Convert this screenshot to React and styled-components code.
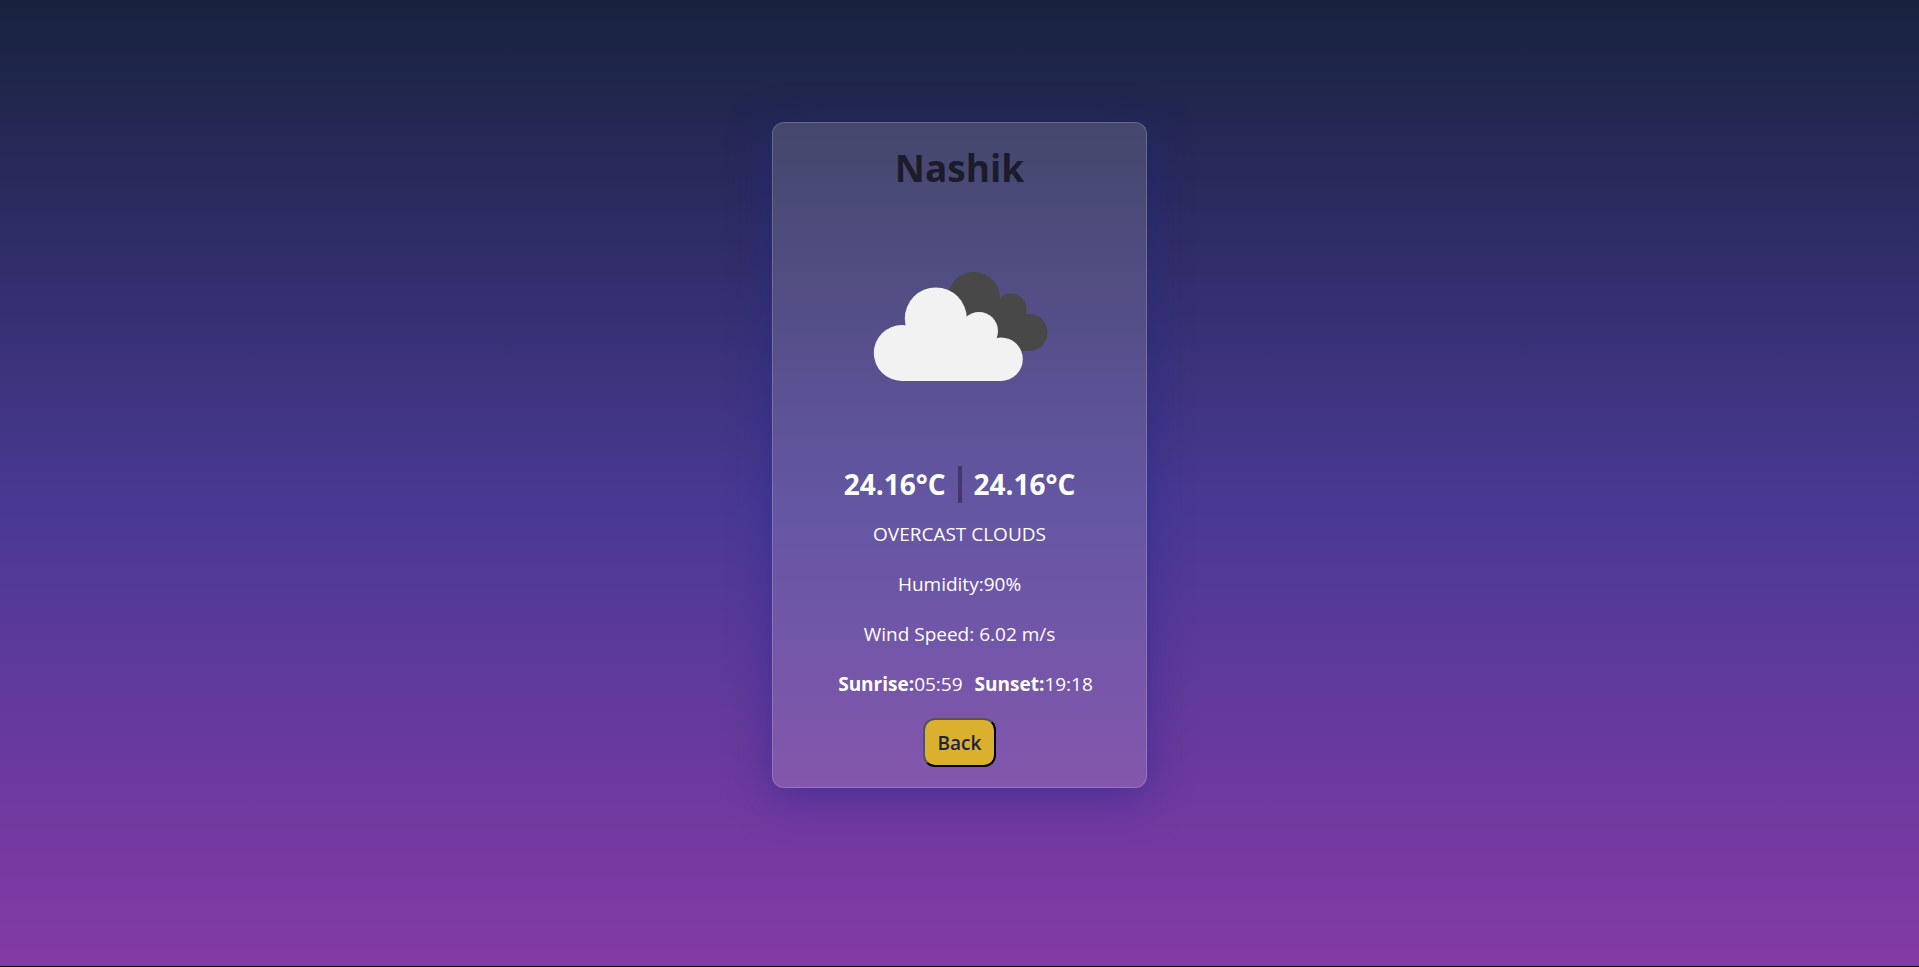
import React from "react";
import styled, { createGlobalStyle } from "styled-components";

const GlobalStyle = createGlobalStyle`
  *, *::before, *::after { box-sizing: border-box; }
  html { background: #000; }
  body {
    margin: 0;
    font-family: "Segoe UI", "Open Sans", "Noto Sans", sans-serif;
    color: #fff;
  }
  h1, p, dl, dd { margin: 0; }
`;

const Page = styled.main`
  display: flex;
  justify-content: center;
  align-items: flex-start;
  min-height: calc(100vh - 1px);
  padding: 122px 16px;
  background: linear-gradient(180deg, #17223e 0%, #4a3994 53%, #843aa5 100%);
`;

const Card = styled.article`
  display: flex;
  flex-direction: column;
  align-items: center;
  width: 100%;
  max-width: 375px;
  padding: 20px;
  border: 1px solid rgba(255, 255, 255, 0.18);
  border-radius: 12px;
  background: rgba(255, 255, 255, 0.15);
  box-shadow: 0 8px 40px rgba(31, 38, 135, 0.5);
`;

const City = styled.h1`
  margin-bottom: 9px;
  color: #1c1b2b;
  font-size: 37px;
  font-weight: 700;
  line-height: 50px;
`;

const WeatherIcon = styled.svg`
  width: 250px;
  height: 250px;
`;

const Temperatures = styled.div`
  display: flex;
  margin: 14px 0 16px;
  gap: 12px;
  font-size: 28px;
  font-weight: 700;
  line-height: 37px;
`;

const Divider = styled.span`
  width: 4px;
  background: #43376c;
`;

const Details = styled.div`
  display: flex;
  flex-direction: column;
  align-items: center;
  gap: 20px;
  font-size: 19px;
  line-height: 30px;
`;

const Condition = styled.p`
  text-transform: uppercase;
`;

const SunTimes = styled.dl`
  display: flex;
`;

const SunTime = styled.div`
  display: flex;
  margin-left: 12px;

  dt { font-weight: 700; }
`;

const BackButton = styled.button`
  margin-top: 19px;
  padding: 9px 13px 7px;
  border: 2px outset #000;
  border-radius: 12px;
  background: #dcb02f;
  color: #1b2340;
  font-family: inherit;
  font-size: 19px;
  font-weight: 600;
  line-height: 29px;
  cursor: pointer;
`;

function OvercastClouds() {
  return (
    <WeatherIcon viewBox="0 0 250 250" role="img" aria-label="Overcast clouds">
      <g fill="#484849">
        <circle cx="139" cy="96" r="26" />
        <circle cx="176" cy="107" r="15.5" />
        <circle cx="194" cy="130.5" r="18.6" />
        <path d="M139 90L176 100L194 130V149H139Z" />
      </g>
      <g fill="#f2f2f2">
        <circle cx="66.8" cy="151" r="28" />
        <circle cx="100.8" cy="116.5" r="31" />
        <circle cx="144" cy="129" r="19" />
        <circle cx="166" cy="157.2" r="21.8" />
        <path d="M66.8 140L100 116L144 129L166 150V179H66.8Z" />
      </g>
    </WeatherIcon>
  );
}

export default function App() {
  return (
    <>
      <GlobalStyle />
      <Page>
        <Card>
          <City>Nashik</City>
          <OvercastClouds />
          <Temperatures>
            <span>24.16°C</span>
            <Divider />
            <span>24.16°C</span>
          </Temperatures>
          <Details>
            <Condition>overcast clouds</Condition>
            <p>Humidity:90%</p>
            <p>Wind Speed: 6.02 m/s</p>
            <SunTimes>
              <SunTime>
                <dt>Sunrise:</dt>
                <dd>05:59</dd>
              </SunTime>
              <SunTime>
                <dt>Sunset:</dt>
                <dd>19:18</dd>
              </SunTime>
            </SunTimes>
          </Details>
          <BackButton type="button">Back</BackButton>
        </Card>
      </Page>
    </>
  );
}
